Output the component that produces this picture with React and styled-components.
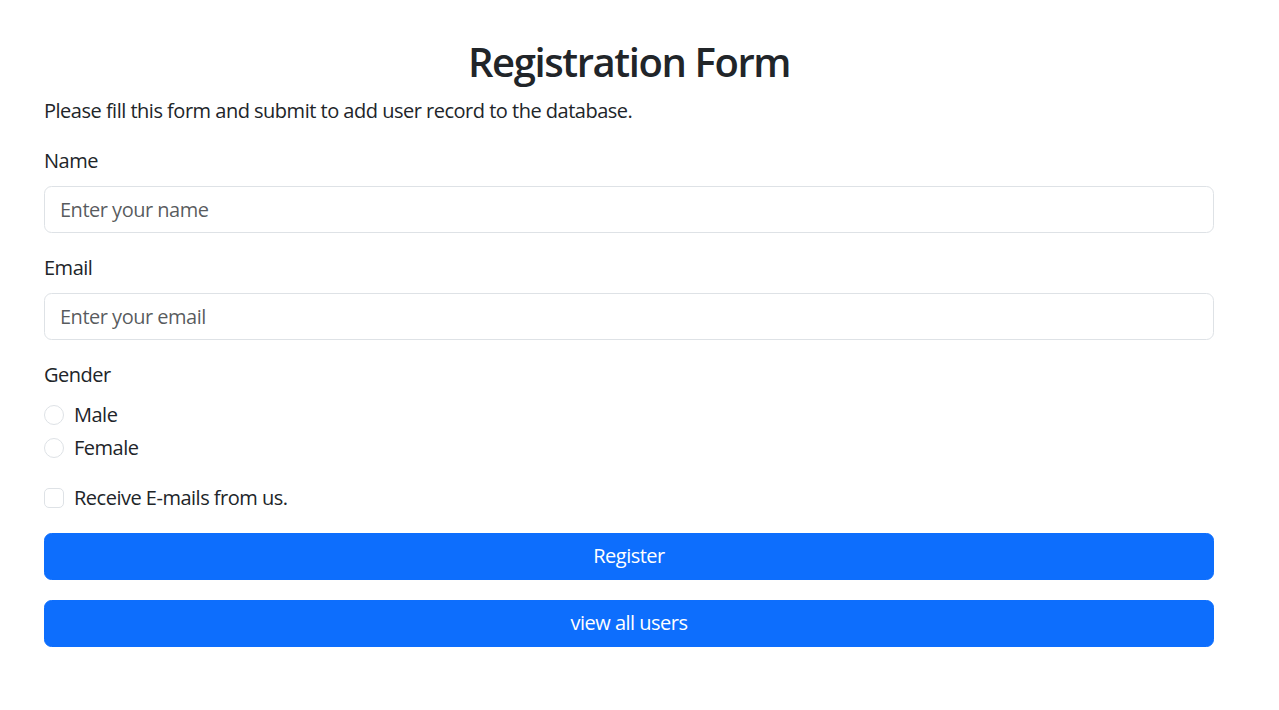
import React from "react";
import styled, { createGlobalStyle } from "styled-components";

const GlobalStyle = createGlobalStyle`
  *, *::before, *::after { box-sizing: border-box; }
  body {
    margin: 0;
    background: #fff;
    color: #212529;
    font-family: "Open Sans", "Noto Sans", sans-serif;
    font-size: 20px;
    line-height: 30px;
    letter-spacing: -0.5px;
  }
`;

const Container = styled.div`
  width: 1170px;
  margin-left: 44px;
  padding-top: 38px;
`;

const Title = styled.h2`
  margin: 0 0 10px;
  text-align: center;
  font-size: 40px;
  font-weight: 600;
  line-height: 48px;
  letter-spacing: -1.4px;
`;

const Lead = styled.p`
  margin: 0 0 20px;
`;

const Group = styled.div`
  margin-bottom: 20px;
`;

const Label = styled.label`
  display: block;
  margin-bottom: 10px;
`;

const Input = styled.input`
  display: block;
  width: 100%;
  height: 47px;
  padding: 7px 15px;
  font: inherit;
  letter-spacing: inherit;
  color: #212529;
  background: #fff;
  border: 1px solid #dee2e6;
  border-radius: 7.5px;
  outline: none;
  &::placeholder { color: rgba(33, 37, 41, 0.75); }
`;

const Check = styled.div`
  display: block;
  min-height: 30px;
  padding-left: 30px;
  margin-bottom: 2.5px;
`;

const CheckInput = styled.input`
  appearance: none;
  float: left;
  margin: 5px 0 0 -30px;
  width: 20px;
  height: 20px;
  border: 1px solid #dee2e6;
  background: #fff;
  border-radius: ${(p) => (p.type === "radio" ? "50%" : "5px")};
`;

const CheckLabel = styled.label``;

const Button = styled.button`
  display: block;
  width: 100%;
  height: 47px;
  padding: 7px 15px;
  font: inherit;
  letter-spacing: inherit;
  color: #fff;
  background: #0d6efd;
  border: 1px solid #0d6efd;
  border-radius: 7.5px;
  margin-bottom: 20px;
  cursor: pointer;
`;

export default function App() {
  return (
    <>
      <GlobalStyle />
      <Container>
        <Title>Registration Form</Title>
        <Lead>Please fill this form and submit to add user record to the database.</Lead>
        <Group>
          <Label>Name</Label>
          <Input type="text" placeholder="Enter your name" />
        </Group>
        <Group>
          <Label>Email</Label>
          <Input type="email" placeholder="Enter your email" />
        </Group>
        <Group>
          <Label>Gender</Label>
          <Check>
            <CheckInput type="radio" name="gender" id="male" />
            <CheckLabel htmlFor="male">Male</CheckLabel>
          </Check>
          <Check>
            <CheckInput type="radio" name="gender" id="female" />
            <CheckLabel htmlFor="female">Female</CheckLabel>
          </Check>
        </Group>
        <Group>
          <Check>
            <CheckInput type="checkbox" id="mails" />
            <CheckLabel htmlFor="mails">Receive E-mails from us.</CheckLabel>
          </Check>
        </Group>
        <Button type="submit">Register</Button>
        <Button type="button">view all users</Button>
      </Container>
    </>
  );
}
